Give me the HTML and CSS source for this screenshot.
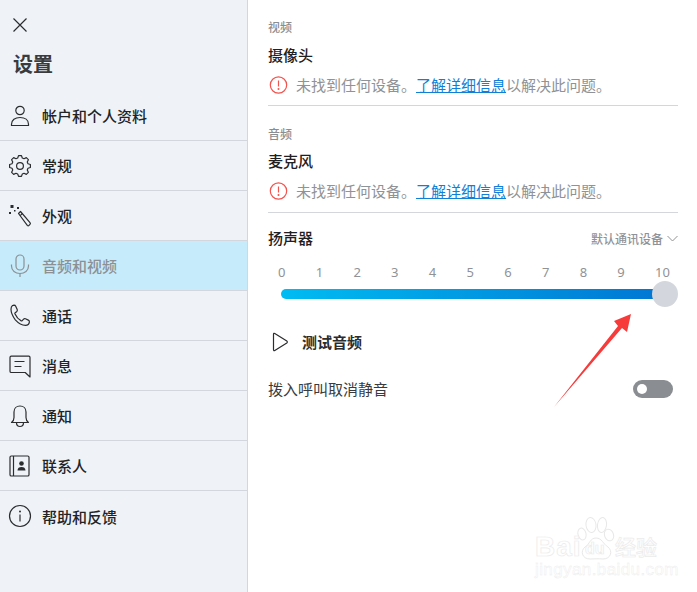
FILE: index.html
```html
<!DOCTYPE html>
<html lang="zh-CN">
<head>
<meta charset="utf-8">
<title>设置</title>
<link rel="stylesheet" href="styles.css">
</head>
<body>
<div class="app">
  <aside class="sidebar">
    <button class="close" aria-label="关闭">
      <svg width="16" height="16" viewBox="0 0 16 16"><path d="M1.5 1.5l13 13M14.5 1.5l-13 13" class="ln"/></svg>
    </button>
    <h1 class="title">设置</h1>
    <nav class="nav">
      <div class="item">
        <svg class="ico" width="24" height="24" viewBox="0 0 24 24"><circle cx="12" cy="6.500" r="4.200" class="ln"/><path d="M3.500 21.500v-1.200c0-4.200 3.600-6.800 8.500-6.800s8.500 2.600 8.500 6.800v1.200z" class="ln"/></svg>
        <span>帐户和个人资料</span>
      </div>
      <div class="item">
        <svg class="ico" width="24" height="24" viewBox="0 0 24 24"><circle cx="12" cy="12" r="3.400" class="ln"/><polygon points="9.71,4.02 10.54,1.6 13.46,1.6 14.29,4.02 16.02,4.74 18.32,3.62 20.38,5.68 19.26,7.98 19.98,9.71 22.4,10.54 22.4,13.46 19.98,14.29 19.26,16.02 20.38,18.32 18.32,20.38 16.02,19.26 14.29,19.98 13.46,22.4 10.54,22.4 9.71,19.98 7.98,19.26 5.68,20.38 3.62,18.32 4.74,16.02 4.02,14.29 1.6,13.46 1.6,10.54 4.02,9.71 4.74,7.98 3.62,5.68 5.68,3.62 7.98,4.74" class="ln round"/></svg>
        <span>常规</span>
      </div>
      <div class="item">
        <svg class="ico" width="24" height="24" viewBox="0 0 24 24"><path d="M10.500 9.500l2-2 9.500 11.200c.5.600.5 1.200 0 1.700l-1 1c-.5.500-1.200.5-1.700 0z" class="ln round"/><path d="M12.200 11.600l2-2" class="ln"/><rect x="2.500" y="1" width="3" height="3" class="fill"/><rect x="9" y="3" width="2" height="2" class="fill"/><rect x="1" y="8" width="2" height="2" class="fill"/><rect x="6" y="6" width="1.500" height="1.500" class="fill"/></svg>
        <span>外观</span>
      </div>
      <div class="item active">
        <svg class="ico" width="24" height="24" viewBox="0 0 24 24"><rect x="8" y="1" width="8" height="15" rx="4" class="ln"/><path d="M3.500 10.500v1.500c0 4.700 3.800 7.500 8.500 7.500s8.500-2.800 8.500-7.500v-1.500M12 19.500v3.500" class="ln"/></svg>
        <span>音频和视频</span>
      </div>
      <div class="item">
        <svg class="ico" width="24" height="24" viewBox="0 0 24 24"><path d="M4.500 1.500l1.500-.3c.8 0 1.400.4 1.700 1.100l1.500 3.300c.3.700.1 1.400-.4 1.900l-1.800 1.500c-.2.200-.2.500-.1.800 1.400 3.200 3.200 5.400 6.300 7.100.3.100.6.100.8-.1l1.600-1.700c.5-.5 1.200-.6 1.900-.3l2.800 1.300c.8.400 1.200 1 1.100 1.800-.2 1.800-1.900 3.400-3.900 3.400-3.500 0-7.100-2-10.200-5.400C5.400 13.200 3 8.800 3 5.200c0-1.600.5-3 1.500-3.700z" class="ln round"/></svg>
        <span>通话</span>
      </div>
      <div class="item">
        <svg class="ico" width="24" height="24" viewBox="0 0 24 24"><path d="M2 3.500c0-.8.500-1.300 1.300-1.300h17.500c.7 0 1.200.5 1.200 1.300V23l-4.800-4.500H3.300c-.8 0-1.300-.5-1.300-1.300z" class="ln round"/><path d="M6.500 7.500h10M6.500 12.500h7" class="ln"/></svg>
        <span>消息</span>
      </div>
      <div class="item">
        <svg class="ico" width="24" height="24" viewBox="0 0 24 24"><path d="M3.500 18.500c1.800-1.300 2.500-2.500 2.500-5V8c0-3.700 2.500-6 6-6s6 2.300 6 6v5.500c0 2.500.7 3.700 2.500 5z" class="ln round"/><path d="M8.500 18.800c0 2.200 1.500 3.700 3.500 3.700s3.500-1.500 3.500-3.700" class="ln"/></svg>
        <span>通知</span>
      </div>
      <div class="item">
        <svg class="ico" width="24" height="24" viewBox="0 0 24 24"><rect x="2" y="2" width="19" height="20" rx="1.300" class="ln"/><path d="M5.500 2v20" class="ln"/><circle cx="13.500" cy="9.500" r="2.300" class="fill"/><path d="M9.500 16.500c0-2.400 1.700-3.500 4-3.500s4 1.100 4 3.500z" class="fill"/></svg>
        <span>联系人</span>
      </div>
      <div class="item last">
        <svg class="ico" width="24" height="24" viewBox="0 0 24 24"><circle cx="12" cy="12" r="10.500" class="ln"/><path d="M12 10.500v7" class="ln"/><circle cx="12" cy="7.500" r="1" class="fill"/></svg>
        <span>帮助和反馈</span>
      </div>
    </nav>
  </aside>

  <main class="content">
    <section class="block">
      <div class="label">视频</div>
      <div class="heading">摄像头</div>
      <div class="error">
        <svg width="20" height="20" viewBox="0 0 20 20"><circle cx="10.500" cy="10" r="8.200" class="alert"/><path d="M10.500 5.500v6" class="alert"/><circle cx="10.500" cy="14" r="1" class="alert-dot"/></svg>
        <span>未找到任何设备。<a href="#">了解详细信息</a>以解决此问题。</span>
      </div>
    </section>
    <section class="block second">
      <div class="label">音频</div>
      <div class="heading">麦克风</div>
      <div class="error">
        <svg width="20" height="20" viewBox="0 0 20 20"><circle cx="10.500" cy="10" r="8.200" class="alert"/><path d="M10.500 5.500v6" class="alert"/><circle cx="10.500" cy="14" r="1" class="alert-dot"/></svg>
        <span>未找到任何设备。<a href="#">了解详细信息</a>以解决此问题。</span>
      </div>
    </section>

    <div class="speaker-row">
      <div class="heading flat">扬声器</div>
      <div class="device">默认通讯设备
        <svg width="11" height="7" viewBox="0 0 11 7"><path d="M.5 1l5 5 5-5" class="chev"/></svg>
      </div>
    </div>

    <div class="ticks">
      <span>0</span><span>1</span><span>2</span><span>3</span><span>4</span><span>5</span><span>6</span><span>7</span><span>8</span><span>9</span><span>10</span>
    </div>
    <div class="slider">
      <div class="track"></div>
      <div class="thumb"></div>
    </div>

    <div class="test">
      <svg width="18" height="20" viewBox="0 0 18 20"><path d="M2.500 2.200c0-.8.600-1.100 1.300-.7l12 7.600c.7.500.7 1.300 0 1.800l-12 7.600c-.7.400-1.300.1-1.300-.7z" class="ln round"/></svg>
      <span>测试音频</span>
    </div>

    <div class="toggle-row">
      <span>拨入呼叫取消静音</span>
      <div class="toggle"><i></i></div>
    </div>
  </main>
</div>

<svg class="arrow" width="90" height="105" viewBox="0 0 90 105"><polygon points="1,102 65,21 61,16 78,9 74,27 69,23" class="arrow-fill"/></svg>

<div class="mark">
  <svg class="paw" width="42" height="48" viewBox="0 0 42 48">
    <ellipse cx="7" cy="20" rx="4" ry="6" class="paw-ln" transform="rotate(-15 7 20)"/>
    <ellipse cx="16" cy="11" rx="5" ry="7.500" class="paw-ln" transform="rotate(-8 16 11)"/>
    <ellipse cx="27" cy="11" rx="4.500" ry="7.500" class="paw-ln" transform="rotate(8 27 11)"/>
    <ellipse cx="34" cy="21" rx="4.500" ry="6" class="paw-ln" transform="rotate(-20 34 21)"/>
    <path d="M21 24c-6 0-6 6-11 9-5 4-3 12 5 12 4 0 8-.5 13 0 8 0 10-8 5-12-5-3-6-9-12-9z" class="paw-ln"/>
  </svg>
  <span class="mark-bai">Bai</span><span class="mark-du">du</span><span class="mark-jy">经验</span>
  <div class="mark-url">jingyan.baidu.com</div>
</div>
</body>
</html>
```
FILE: styles.css
```css
* { box-sizing: border-box; }
html, body { margin: 0; height: 100%; }
body {
  width: 697px;
  height: 592px;
  overflow: hidden;
  background: #fff;
  font-family: "Noto Sans CJK SC", "Noto Sans", sans-serif;
  color: #2b2c2e;
  position: relative;
}
.app { display: flex; height: 592px; }

.ln { fill: none; stroke: currentColor; stroke-width: 1.2; }
.round { stroke-linejoin: round; }
.fill { fill: currentColor; }

.sidebar {
  width: 248px;
  flex: none;
  background: #eff3f8;
  border-right: 1px solid #d3d6dc;
  color: #2b2c2e;
}
.close {
  display: block;
  background: none;
  border: 0;
  padding: 0;
  margin: 17px 0 0 12px;
  width: 16px;
  height: 16px;
  color: #2b2c2e;
}
.close svg { display: block; }
.title {
  margin: 15px 0 0 13px;
  font-size: 20px;
  line-height: 32px;
  font-weight: 700;
  color: #3a3b3d;
}
.nav { margin-top: 11px; }
.item {
  display: flex;
  align-items: center;
  height: 50px;
  padding-left: 8px;
  gap: 10px;
  border-bottom: 1px solid #d3d6dc;
  font-size: 15px;
  font-weight: 500;
  color: #222325;
}
.item.last { border-bottom: 0; }
.item .ico { flex: none; color: #2b2c2e; }
.item.active { background: #c6ebfb; color: #8c9094; }
.item.active .ico { color: #8c9094; }

.content {
  flex: 1;
  padding: 0 19px 0 20px;
}
.block { border-bottom: 1px solid #d3d6dc; height: 106px; padding-top: 18px; }
.block.second { height: 107px; padding-top: 19px; }
.label { font-size: 12px; line-height: 17px; font-weight: 500; color: #8a8d91; }
.heading {
  font-size: 15px;
  line-height: 22px;
  font-weight: 500;
  color: #1f2022;
  margin-top: 9px;
}
.block.second .heading { margin-top: 8px; }
.heading.flat { margin-top: 0; }
.error {
  display: flex;
  align-items: center;
  gap: 8px;
  margin-top: 8px;
  font-size: 15px;
  line-height: 22px;
  color: #8f9296;
}
.error svg { flex: none; }
.error a { color: #0f7fd8; text-decoration: underline; }
.alert { fill: none; stroke: #f2544e; stroke-width: 1.200; }
.alert-dot { fill: #f2544e; }

.speaker-row {
  display: flex;
  justify-content: space-between;
  align-items: center;
  margin-top: 14px;
}
.device {
  display: flex;
  align-items: center;
  gap: 4px;
  font-size: 12px;
  font-weight: 500;
  color: #8f9296;
}
.chev { fill: none; stroke: #8f9296; stroke-width: 1; }

.ticks {
  display: flex;
  justify-content: space-between;
  margin: 14px 8px 0 10px;
  font-family: "Noto Sans", sans-serif;
  font-size: 13px;
  line-height: 18px;
  color: #8f9296;
}
.slider {
  display: flex;
  align-items: center;
  height: 26px;
  padding-left: 13px;
}
.track {
  flex: 1;
  height: 10px;
  border-radius: 5px 0 0 5px;
  background: linear-gradient(90deg, #00bcf2, #0078d4);
}
.thumb {
  width: 26px;
  height: 26px;
  margin-left: -2px;
  border-radius: 50%;
  background: #d3d6dc;
  position: relative;
}

.test {
  display: flex;
  align-items: center;
  gap: 13px;
  margin-top: 24px;
  padding-left: 3px;
  font-size: 15px;
  font-weight: 700;
  line-height: 22px;
  color: #2b2c2e;
}
.toggle-row {
  display: flex;
  justify-content: space-between;
  align-items: center;
  margin-top: 25px;
  padding-right: 5px;
  font-size: 15px;
  line-height: 22px;
  color: #3a3b3d;
}
.toggle {
  width: 40px;
  height: 18px;
  border-radius: 9px;
  background: #8a8d91;
  display: flex;
  align-items: center;
  padding-left: 4px;
}
.toggle i {
  display: block;
  width: 10px;
  height: 10px;
  border-radius: 50%;
  background: #fff;
}

.arrow { position: absolute; left: 553px; top: 305px; }
.arrow-fill { fill: #f73b3b; }

.mark {
  position: absolute;
  left: 535px;
  top: 517px;
  width: 150px;
  height: 68px;
  font-family: "Liberation Sans", sans-serif;
  color: #fff;
  -webkit-text-stroke: 0.7px #ebebeb;
}
.paw { position: absolute; left: 40px; top: -3px; }
.paw-ln { fill: #fff; stroke: #e8e8e8; stroke-width: 1; }
.mark-bai, .mark-du, .mark-jy { position: absolute; font-weight: 700; white-space: nowrap; }
.mark-bai { left: 0; top: 15px; font-size: 28px; line-height: 30px; letter-spacing: 1px; }
.mark-du { left: 50px; top: 23px; font-size: 16px; line-height: 18px; }
.mark-jy {
  left: 80px;
  top: 15px;
  font-family: "Noto Sans CJK SC", sans-serif;
  font-size: 21px;
  line-height: 28px;
  font-weight: 500;
}
.mark-url {
  position: absolute;
  left: 0;
  top: 44px;
  font-size: 17px;
  line-height: 18px;
  letter-spacing: .4px;
  white-space: nowrap;
  -webkit-text-stroke: 0.4px #ebebeb;
}
```
